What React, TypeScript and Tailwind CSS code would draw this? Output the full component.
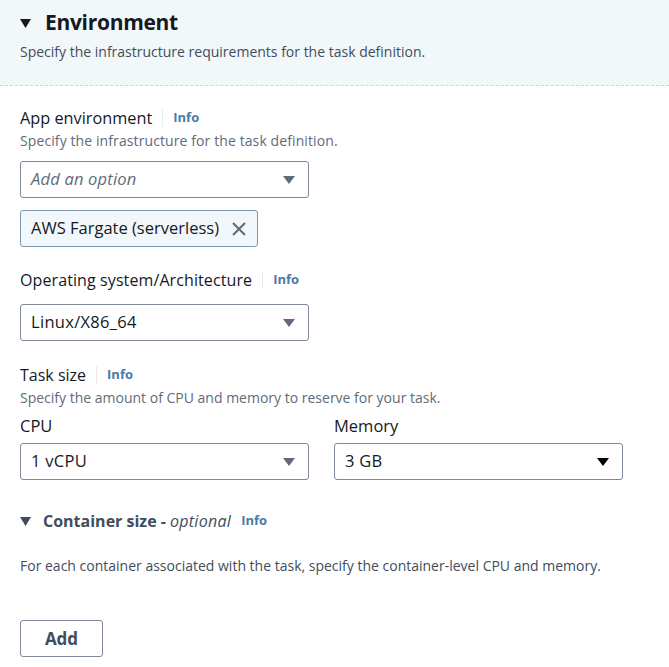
import React from "react";

const Caret = ({ color = "#5f6b7a" }: { color?: string }) => (
  <svg width="14" height="10" viewBox="0 0 14 10">
    <path d="M1 1 H13 L7 9 Z" fill={color} />
  </svg>
);

const Info = () => (
  <span className="flex items-center">
    <span className="mx-[10px] h-[18px] w-px bg-[#e9ebed]" />
    <span className="text-[13px] font-bold text-[#4a7aa8]">Info</span>
  </span>
);

const Select = ({
  value,
  placeholder,
  dark,
}: {
  value?: string;
  placeholder?: string;
  dark?: boolean;
}) => (
  <div className="w-[289px] h-[37px] flex items-center justify-between rounded-[3px] border border-[#7d8998] bg-white pl-[10px] pr-[12px]">
    {placeholder ? (
      <span className="text-[16.5px] tracking-[0.2px] italic text-[#5f6b7a]">{placeholder}</span>
    ) : (
      <span className="text-[16.5px] tracking-[0.3px] text-[#16191f]">{value}</span>
    )}
    <Caret color={dark ? "#000000" : "#5f6b7a"} />
  </div>
);

export default function App() {
  return (
    <div
      className="w-[669px] h-[667px] bg-white text-[#16191f] overflow-hidden"
      style={{ fontFamily: '"Open Sans", "Noto Sans", sans-serif' }}
    >
      <div className="h-[86px] bg-[#f2f8fa] border-b border-dashed border-[#d1d5db] px-[20px] pt-[8px]">
        <div className="flex items-center h-[30px]">
          <svg width="11" height="9" viewBox="0 0 11 9" className="mr-[14px]">
            <path d="M0 0 H11 L5.5 9 Z" fill="#16191f" />
          </svg>
          <span className="text-[21px] font-bold tracking-[-0.3px]">Environment</span>
        </div>
        <div className="mt-[3px] text-[14px] text-[#414d5c]">
          Specify the infrastructure requirements for the task definition.
        </div>
      </div>

      <div className="px-[20px]">
        <div className="mt-[21px] flex items-center h-[22px]">
          <span className="text-[16.3px]">App environment</span>
          <Info />
        </div>
        <div className="mt-[1px] text-[14px] tracking-[0.1px] text-[#5f6b7a]">
          Specify the infrastructure for the task definition.
        </div>
        <div className="mt-[10px]">
          <Select placeholder="Add an option" />
        </div>
        <div className="mt-[12px] w-[238px] h-[37px] flex items-center justify-between rounded-[3px] border border-[#7d97b0] bg-[#f1f7fa] pl-[10px] pr-[10px]">
          <span className="text-[16.5px]">AWS Fargate (serverless)</span>
          <svg width="16" height="16" viewBox="0 0 16 16">
            <path d="M2 2 L14 14 M14 2 L2 14" stroke="#5f6b7a" strokeWidth="2" />
          </svg>
        </div>

        <div className="mt-[22px] flex items-center h-[22px]">
          <span className="text-[16px] tracking-[0.1px]">Operating system/Architecture</span>
          <Info />
        </div>
        <div className="mt-[13px]">
          <Select value="Linux/X86_64" />
        </div>

        <div className="mt-[23px] flex items-center h-[22px]">
          <span className="text-[16px]">Task size</span>
          <Info />
        </div>
        <div className="mt-[1px] text-[14px] text-[#5f6b7a]">
          Specify the amount of CPU and memory to reserve for your task.
        </div>
        <div className="mt-[6px] flex gap-[25px]">
          <div>
            <div className="text-[16.5px] h-[22px]">CPU</div>
            <div className="mt-[7px]">
              <Select value="1 vCPU" />
            </div>
          </div>
          <div>
            <div className="text-[16.5px] h-[22px]">Memory</div>
            <div className="mt-[7px]">
              <Select value="3 GB" dark />
            </div>
          </div>
        </div>

        <div className="mt-[30px] flex items-center h-[22px]">
          <svg width="11" height="9" viewBox="0 0 11 9" className="mr-[12px]">
            <path d="M0 0 H11 L5.5 9 Z" fill="#414d5c" />
          </svg>
          <span className="text-[16px] font-bold text-[#414d5c]">Container size - </span>
          <span className="ml-[4px] text-[16px] tracking-[0.3px] italic text-[#414d5c]">optional</span>
          <span className="ml-[10px] text-[13px] font-bold text-[#4a7aa8]">Info</span>
        </div>
        <div className="mt-[23px] text-[14px] text-[#414d5c]">
          For each container associated with the task, specify the container-level CPU and memory.
        </div>
        <div className="mt-[44px] w-[83px] h-[37px] flex items-center justify-center rounded-[3px] border border-[#7d8998] text-[17px] font-bold text-[#414d5c]">
          Add
        </div>
      </div>
    </div>
  );
}
